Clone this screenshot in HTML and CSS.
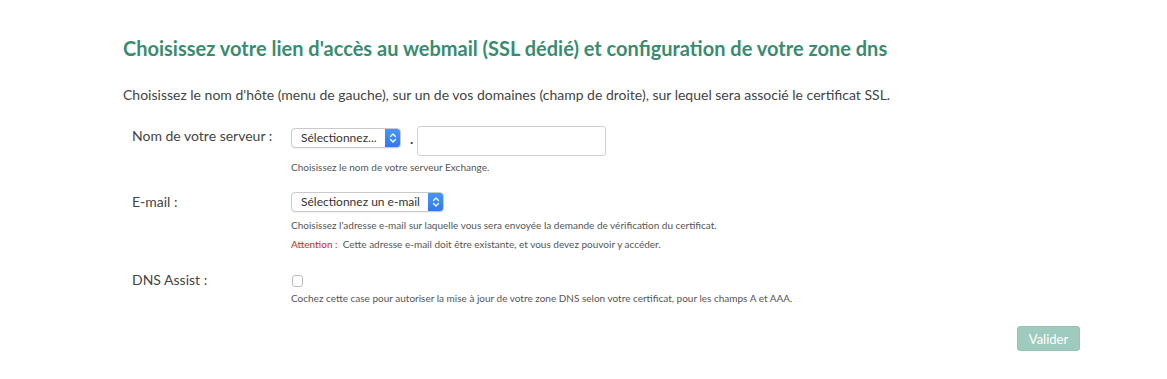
FILE: index.html
```html
<!DOCTYPE html>
<html lang="fr">
<head>
<meta charset="utf-8">
<link rel="stylesheet" href="styles.css">
</head>
<body>
<div class="page">
  <h2 class="title">Choisissez votre lien d'accès au webmail (SSL dédié) et configuration de votre zone dns</h2>
  <p class="intro">Choisissez le nom d'hôte (menu de gauche), sur un de vos domaines (champ de droite), sur lequel sera associé le certificat SSL.</p>

  <div class="form">
    <div class="row row-server">
      <div class="label">Nom de votre serveur :</div>
      <div class="field">
        <div class="controls">
          <div class="select select-short">
            <span class="select-text">Sélectionnez...</span>
            <span class="select-arrow"><svg width="8" height="12" viewBox="0 0 8 12"><path d="M1.5 4.5 L4 2 L6.5 4.5 M1.5 7.5 L4 10 L6.5 7.5" fill="none" stroke="#fff" stroke-width="1.3" stroke-linecap="round" stroke-linejoin="round"/></svg></span>
          </div>
          <span class="dot">.</span>
          <div class="input"></div>
        </div>
        <div class="help help-server">Choisissez le nom de votre serveur Exchange.</div>
      </div>
    </div>

    <div class="row row-email">
      <div class="label">E-mail :</div>
      <div class="field">
        <div class="select select-long">
          <span class="select-text">Sélectionnez un e-mail</span>
          <span class="select-arrow"><svg width="8" height="12" viewBox="0 0 8 12"><path d="M1.5 4.5 L4 2 L6.5 4.5 M1.5 7.5 L4 10 L6.5 7.5" fill="none" stroke="#fff" stroke-width="1.3" stroke-linecap="round" stroke-linejoin="round"/></svg></span>
        </div>
        <div class="help help-first">Choisissez l'adresse e-mail sur laquelle vous sera envoyée la demande de vérification du certificat.</div>
        <div class="help help-warn"><span class="warn">Attention :</span>&nbsp; Cette adresse e-mail doit être existante, et vous devez pouvoir y accéder.</div>
      </div>
    </div>

    <div class="row row-dns">
      <div class="label">DNS Assist :</div>
      <div class="field">
        <div class="checkbox"></div>
        <div class="help help-dns">Cochez cette case pour autoriser la mise à jour de votre zone DNS selon votre certificat, pour les champs A et AAA.</div>
      </div>
    </div>
  </div>

  <div class="actions">
    <button class="btn" type="button">Valider</button>
  </div>
</div>
</body>
</html>
```

FILE: styles.css
```css
html, body {
  margin: 0;
  padding: 0;
  background: #ffffff;
}
body {
  font-family: Lato, "Open Sans", "Liberation Sans", sans-serif;
  color: #444;
}
.page {
  width: 957px;
  padding: 34px 0 0 123px;
}
.title {
  margin: 0;
  font-size: 20px;
  font-weight: 700;
  line-height: 28px;
  color: #3a8c70;
}
.intro {
  margin: 24px 0 0 0;
  font-size: 14px;
  line-height: 18px;
  color: #444;
}
.form {
  margin-top: 22px;
}
.row {
  display: grid;
  grid-template-columns: 168px 1fr;
}
.label {
  padding-left: 9px;
  font-size: 14px;
  line-height: 18px;
  color: #444;
}
.row-server .label { padding-top: 1px; }
.controls {
  display: flex;
  align-items: flex-start;
}
.select {
  display: flex;
  align-items: stretch;
  height: 20px;
  box-sizing: border-box;
  border: 1px solid #c9c9c9;
  border-radius: 4px;
  background: #fff;
  box-shadow: 0 1px 1px rgba(0,0,0,0.06);
  overflow: hidden;
}
.controls .select { margin-top: 2px; }
.select-short { width: 110px; }
.select-long { width: 153px; }
.select-text {
  flex: 1;
  padding-left: 9px;
  font-size: 12px;
  line-height: 18px;
  color: #333;
  white-space: nowrap;
}
.select-arrow {
  width: 16px;
  margin: -1px -1px -1px 0;
  display: flex;
  align-items: center;
  justify-content: center;
  background: linear-gradient(#4a97f7, #2c78ee);
  border-radius: 0 4px 4px 0;
}
.dot {
  margin: 4px 4px 0 9px;
  font-size: 14px;
  line-height: 18px;
  font-weight: 700;
  color: #444;
}
.input {
  width: 189px;
  height: 30px;
  box-sizing: border-box;
  border: 1px solid #cfcfcf;
  border-radius: 3px;
  background: #fff;
}
.help {
  font-size: 10px;
  line-height: 12px;
  color: #555;
}
.help-server { margin-top: 5px; }
.row-email { margin-top: 19px; }
.row-email .label { padding-top: 1px; }
.help-first { margin-top: 7px; }
.help-warn { margin-top: 7px; }
.warn { color: #e0201c; }
.row-dns { margin-top: 21px; }
.checkbox {
  width: 11px;
  height: 12px;
  margin: 4px 0 0 1px;
  box-sizing: border-box;
  border: 1px solid #bdbdbd;
  border-radius: 3px;
  background: #fff;
}
.help-dns { margin-top: 5px; }
.actions {
  display: flex;
  justify-content: flex-end;
  margin-top: 22px;
}
.btn {
  width: 63px;
  height: 25px;
  padding: 0;
  border: 1px solid #93c3b4;
  border-radius: 3px;
  background: #9fcbbe;
  color: #fff;
  font-family: Lato, "Open Sans", "Liberation Sans", sans-serif;
  font-size: 13px;
}
```
